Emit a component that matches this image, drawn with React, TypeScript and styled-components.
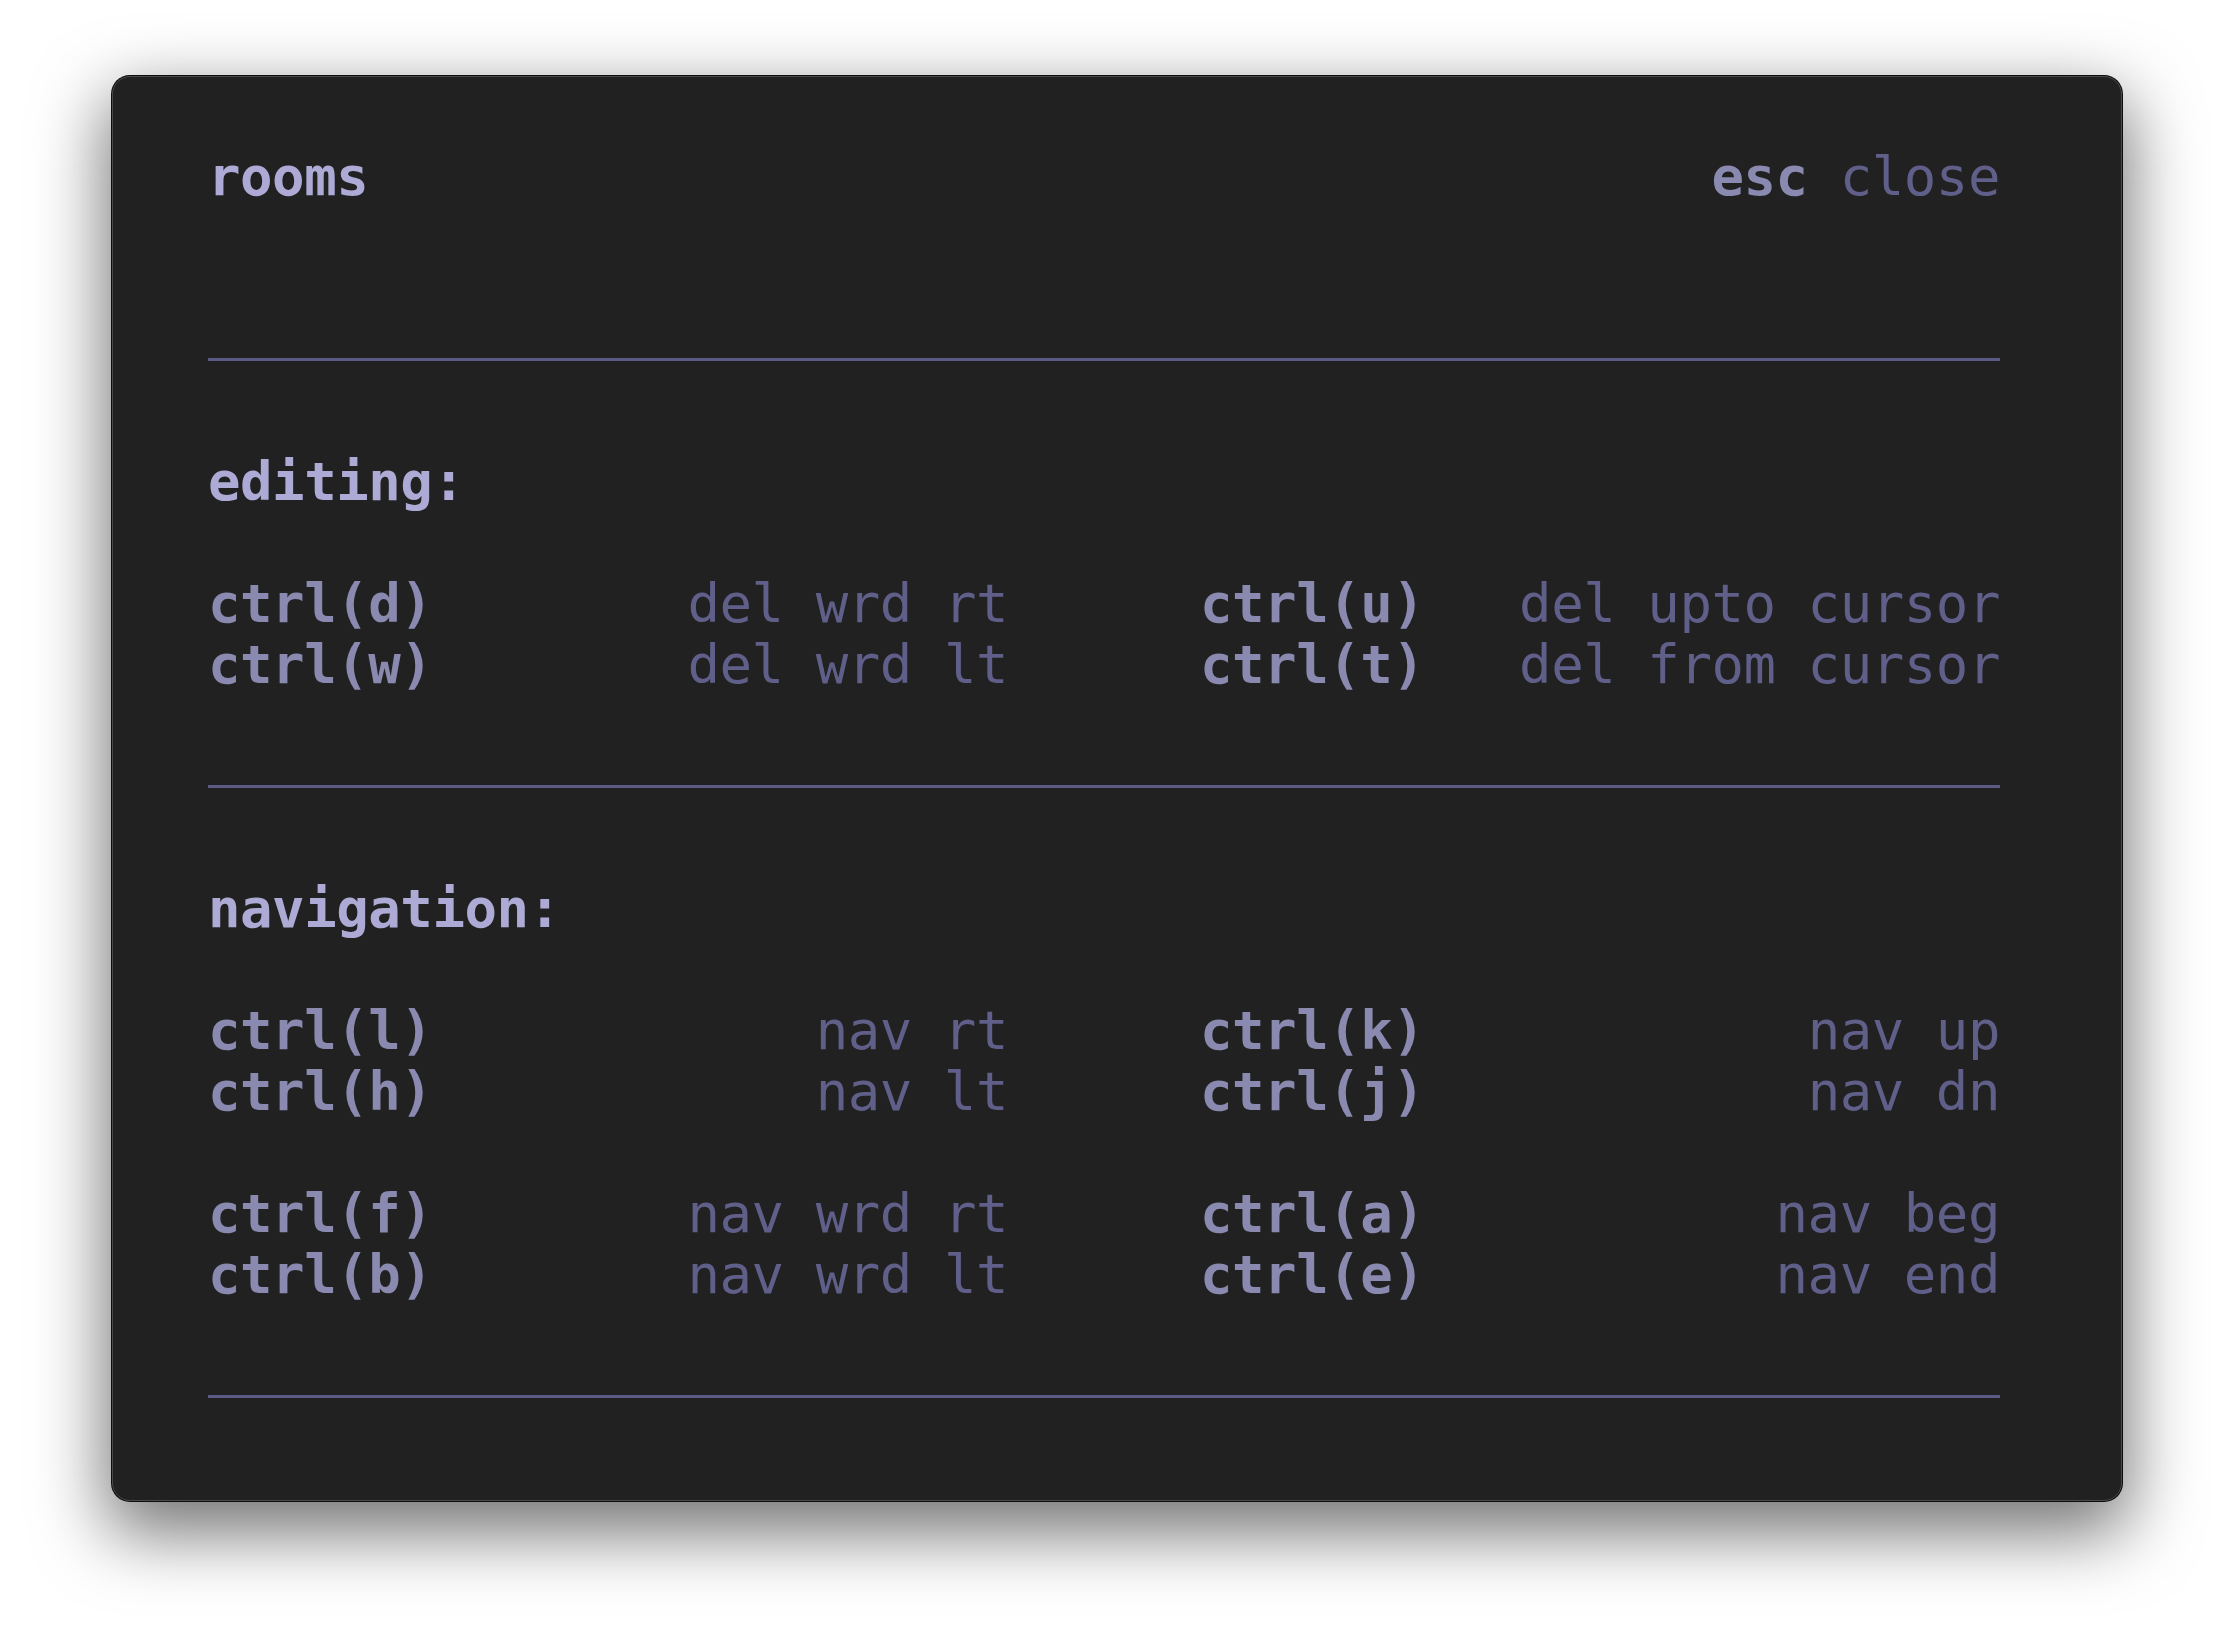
import React from "react";
import styled, { createGlobalStyle } from "styled-components";

const GlobalStyle = createGlobalStyle`
  html, body {
    margin: 0;
    padding: 0;
    background: #ffffff;
  }
`;

const Page = styled.div`
  box-sizing: border-box;
  min-height: 100vh;
  padding: 76px 0 0 112px;
  background: #ffffff;
`;

const Window = styled.div`
  box-sizing: border-box;
  width: 2010px;
  background: #212121;
  border: 1px solid #4a4a4a;
  border-radius: 18px;
  box-shadow: 0 0 0 1px #0c0c0c, 0 26px 70px 6px rgba(0, 0, 0, 0.55);
  padding: 68.5px 121px 73px 95px;
  font-family: "DejaVu Sans Mono", monospace;
  font-size: 54px;
  letter-spacing: -0.45px;
  line-height: 61px;
  white-space: pre;
`;

const Header = styled.div`
  display: flex;
  justify-content: space-between;
  margin-bottom: 122px;
`;

const Title = styled.span`
  font-weight: 700;
  color: #adabd6;
`;

const Key = styled.span`
  font-weight: 700;
  color: #8a89b0;
`;

const Desc = styled.span`
  font-weight: 400;
  color: #605f8a;
`;

const Divider = styled.div`
  height: 61px;
  display: flex;
  align-items: center;

  &::before {
    content: "";
    flex: 1;
    height: 3px;
    background: #5c5b85;
  }
`;

const Section = styled.section`
  padding: 61px 0;
`;

const SectionTitle = styled.div`
  font-weight: 700;
  color: #adabd6;
  margin-bottom: 61px;
`;

const Groups = styled.div`
  display: flex;
  flex-direction: column;
  gap: 61px;
`;

const Grid = styled.div`
  display: grid;
  grid-template-columns: 800px 800px;
  column-gap: 192px;
`;

const Binding = styled.div`
  display: flex;
  justify-content: space-between;
`;

type Pair = [string, string];

const sections: { title: string; groups: Pair[][] }[] = [
  {
    title: "editing:",
    groups: [
      [
        ["ctrl(d)", "del wrd rt"],
        ["ctrl(u)", "del upto cursor"],
        ["ctrl(w)", "del wrd lt"],
        ["ctrl(t)", "del from cursor"],
      ],
    ],
  },
  {
    title: "navigation:",
    groups: [
      [
        ["ctrl(l)", "nav rt"],
        ["ctrl(k)", "nav up"],
        ["ctrl(h)", "nav lt"],
        ["ctrl(j)", "nav dn"],
      ],
      [
        ["ctrl(f)", "nav wrd rt"],
        ["ctrl(a)", "nav beg"],
        ["ctrl(b)", "nav wrd lt"],
        ["ctrl(e)", "nav end"],
      ],
    ],
  },
];

export default function App() {
  return (
    <>
      <GlobalStyle />
      <Page>
        <Window>
          <Header>
            <Title>rooms</Title>
            <span>
              <Key>esc</Key>
              <Desc> close</Desc>
            </span>
          </Header>
          <Divider />
          {sections.map((s) => (
            <React.Fragment key={s.title}>
              <Section>
                <SectionTitle>{s.title}</SectionTitle>
                <Groups>
                  {s.groups.map((g, gi) => (
                    <Grid key={gi}>
                      {g.map(([k, d]) => (
                        <Binding key={k}>
                          <Key>{k}</Key>
                          <Desc>{d}</Desc>
                        </Binding>
                      ))}
                    </Grid>
                  ))}
                </Groups>
              </Section>
              <Divider />
            </React.Fragment>
          ))}
        </Window>
      </Page>
    </>
  );
}
